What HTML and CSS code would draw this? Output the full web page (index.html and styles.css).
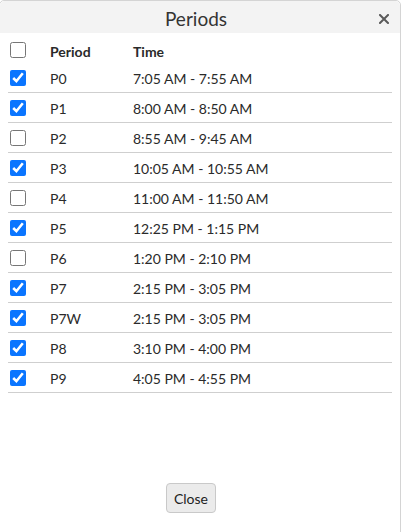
FILE: index.html
```html
<!DOCTYPE html>
<html>
<head>
<meta charset="utf-8">
<link rel="stylesheet" href="styles.css">
</head>
<body>
<div class="dialog">
  <div class="header">
    <span class="title">Periods</span>
    <svg class="close-x" width="10" height="10" viewBox="0 0 10 10"><path d="M1 1 L9 9 M9 1 L1 9" stroke="#5a5a5a" stroke-width="2" stroke-linecap="square"/></svg>
  </div>
  <div class="body">
    <table class="periods">
      <thead>
        <tr><th class="cb"><input type="checkbox"></th><th class="per">Period</th><th>Time</th></tr>
      </thead>
      <tbody>
        <tr><td class="cb"><input type="checkbox" checked></td><td>P0</td><td>7:05 AM - 7:55 AM</td></tr>
        <tr><td class="cb"><input type="checkbox" checked></td><td>P1</td><td>8:00 AM - 8:50 AM</td></tr>
        <tr><td class="cb"><input type="checkbox"></td><td>P2</td><td>8:55 AM - 9:45 AM</td></tr>
        <tr><td class="cb"><input type="checkbox" checked></td><td>P3</td><td>10:05 AM - 10:55 AM</td></tr>
        <tr><td class="cb"><input type="checkbox"></td><td>P4</td><td>11:00 AM - 11:50 AM</td></tr>
        <tr><td class="cb"><input type="checkbox" checked></td><td>P5</td><td>12:25 PM - 1:15 PM</td></tr>
        <tr><td class="cb"><input type="checkbox"></td><td>P6</td><td>1:20 PM - 2:10 PM</td></tr>
        <tr><td class="cb"><input type="checkbox" checked></td><td>P7</td><td>2:15 PM - 3:05 PM</td></tr>
        <tr><td class="cb"><input type="checkbox" checked></td><td>P7W</td><td>2:15 PM - 3:05 PM</td></tr>
        <tr><td class="cb"><input type="checkbox" checked></td><td>P8</td><td>3:10 PM - 4:00 PM</td></tr>
        <tr><td class="cb"><input type="checkbox" checked></td><td>P9</td><td>4:05 PM - 4:55 PM</td></tr>
      </tbody>
    </table>
  </div>
  <div class="footer">
    <button class="btn">Close</button>
  </div>
</div>
</body>
</html>
```
FILE: styles.css
```css
html, body {
  margin: 0;
  padding: 0;
  background: #fff;
}
body {
  font-family: Lato, "Open Sans", sans-serif;
  color: #2a2a2a;
  height: 532px;
  overflow: hidden;
}
.dialog {
  margin-left: -1px;
  width: 402px;
  height: 540px;
  border: 1px solid #d4d4d4;
  border-radius: 5px;
  box-sizing: border-box;
  display: flex;
  flex-direction: column;
  background: #fff;
}
.header {
  height: 32px;
  background: #f3f3f3;
  border-radius: 5px 5px 0 0;
  display: flex;
  align-items: center;
  justify-content: center;
  position: relative;
}
.title {
  font-size: 19px;
  color: #333;
  padding-top: 3px;
  margin-right: 8px;
}
.close-x {
  position: absolute;
  right: 11px;
  top: 13px;
}
.body {
  padding: 0 8px;
}
.periods {
  width: 384px;
  border-collapse: collapse;
  font-size: 14px;
}
.periods th {
  text-align: left;
  font-weight: bold;
  height: 23px;
  padding: 7px 0 0 0;
  vertical-align: middle;
  font-size: 14px;
}
.periods th.cb {
  padding-top: 3px;
  height: 27px;
}
.periods td {
  height: 27px;
  padding: 2px 0 0 0;
  border-bottom: 1px solid #cfcfcf;
  vertical-align: middle;
}
.periods td.cb {
  padding-top: 0;
  height: 29px;
}
.periods .cb {
  width: 42px;
}
.periods th.per {
  width: 83px;
}
.periods input {
  width: 16px;
  height: 16px;
  margin: 0 0 0 2px;
  display: block;
  accent-color: #0a75ff;
}
.footer {
  flex: 1;
  display: flex;
  justify-content: center;
  align-items: flex-start;
  padding-top: 90px;
  padding-right: 18px;
}
.btn {
  font-family: Lato, "Open Sans", sans-serif;
  font-size: 14px;
  color: #222;
  background: #ebebeb;
  border: 1px solid #c9c9c9;
  border-radius: 4px;
  height: 30px;
  width: 50px;
  padding: 0;
}
```
